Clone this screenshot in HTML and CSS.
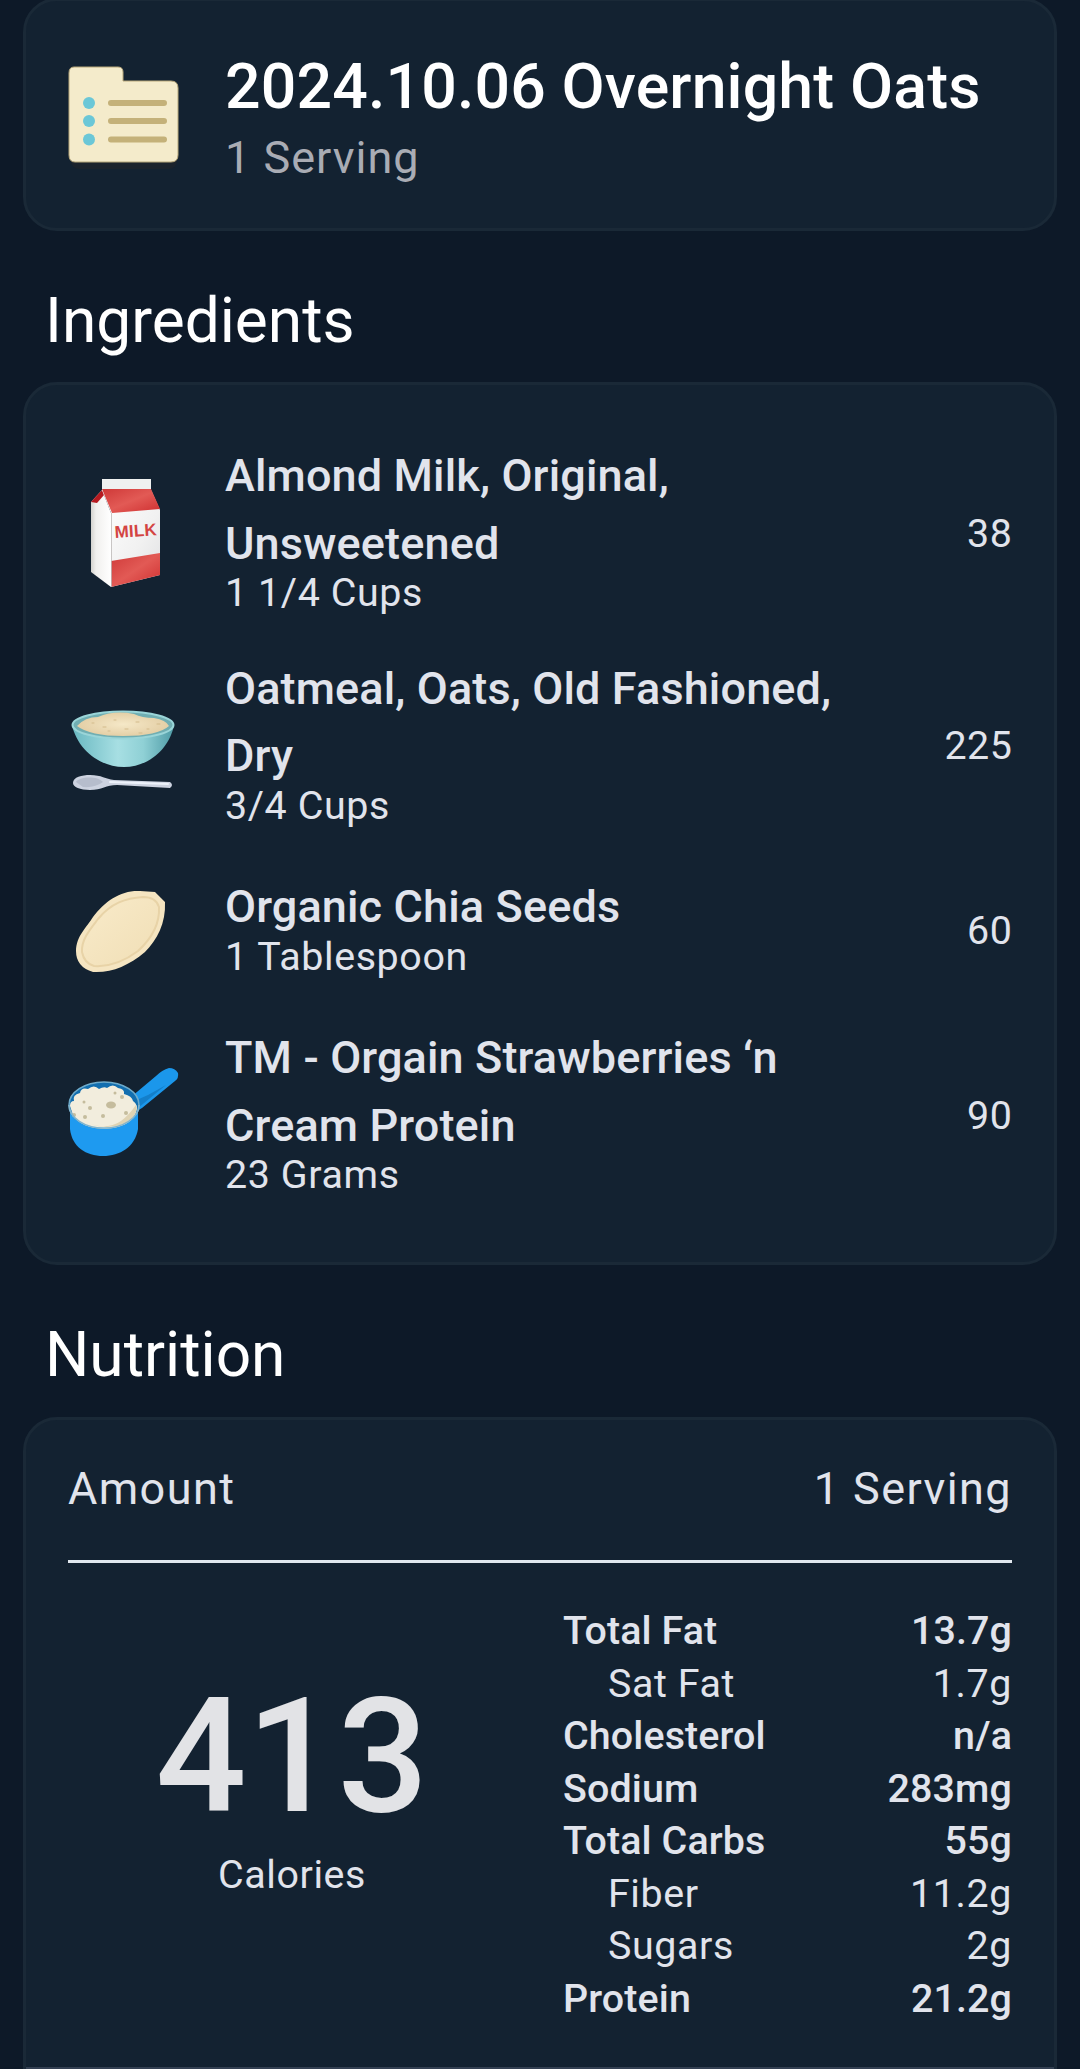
FILE: index.html
```html
<!DOCTYPE html>
<html lang="en">
<head>
  <meta charset="UTF-8" />
  <meta name="viewport" content="width=device-width, initial-scale=1.0"/>
  <title>2024.10.06 Overnight Oats</title>
  <link rel="stylesheet" href="styles.css">
</head>
<body>
  <header class="card recipe">
    <svg class="icon" viewBox="0 0 112 112">
      <rect x="3" y="22" width="106" height="87" rx="8" fill="#1b232c"/>
      <path d="M6 7H50Q55 7 55 12V21H103Q110 21 110 28V95Q110 102 103 102H7Q1 102 1 95V13Q1 7 6 7Z" fill="#f4ebcb" stroke="#b7a77b"/>
      <g fill="#6bc7d7">
        <circle cx="21" cy="43" r="6"/>
        <circle cx="21" cy="61" r="6"/>
        <circle cx="21" cy="79.500" r="6"/>
      </g>
      <path d="M43 43H96M43 61H96M43 79.500H96" stroke="#c4b179" stroke-width="6" stroke-linecap="round"/>
    </svg>
    <div>
      <h1>2024.10.06 Overnight Oats</h1>
      <p class="serving">1 Serving</p>
    </div>
  </header>

  <h2 class="ingredients-title">Ingredients</h2>
  <section class="card ingredients">
    <div class="row">
      <svg class="icon" viewBox="0 0 112 112">
        <defs>
          <linearGradient id="side"><stop offset="0" stop-color="#d3d2ce"/><stop offset="0.250" stop-color="#f1f0ee"/><stop offset="1" stop-color="#fff"/></linearGradient>
          <linearGradient id="front" x2="1" y2="1"><stop offset="0" stop-color="#fff"/><stop offset="0.600" stop-color="#f1f1f1"/><stop offset="1" stop-color="#dfe0e2"/></linearGradient>
          <linearGradient id="red" x2="1" y2="1"><stop offset="0" stop-color="#cf3938"/><stop offset="0.500" stop-color="#e25a55"/><stop offset="1" stop-color="#cf2f30"/></linearGradient>
        </defs>
        <path d="M34 2H83V14H34Z" fill="#eff1f0"/>
        <path d="M34 13L23 25V95L43 110V36Z" fill="url(#side)"/>
        <path d="M34 13L23 25L29 26L36 18Z" fill="#b61a20"/>
        <path d="M34 13H83L92 33V98L43 110V36Z" fill="url(#front)"/>
        <path d="M34 12H83L92 32L44 36Z" fill="url(#red)"/>
        <path d="M43 84L92 76V98L43 110Z" fill="url(#red)"/>
        <path d="M43.500 36V110" stroke="#bcb9b7" stroke-width="0.800"/>
        <text x="47" y="61" class="milk-label" transform="rotate(-4 47 61)" textLength="42">MILK</text>
      </svg>
      <div class="info">
        <h3>Almond Milk, Original, Unsweetened</h3>
        <p>1 1/4 Cups</p>
      </div>
      <span class="value">38</span>
    </div>

    <div class="row">
      <svg class="icon" viewBox="0 0 112 112">
        <defs>
          <linearGradient id="bowl"><stop offset="0" stop-color="#69b8c1"/><stop offset="0.450" stop-color="#a7dfe3"/><stop offset="0.700" stop-color="#8fd0d5"/><stop offset="1" stop-color="#4e9ba6"/></linearGradient>
          <radialGradient id="oats"><stop offset="0" stop-color="#f5e8c7"/><stop offset="1" stop-color="#e4cfa6"/></radialGradient>
        </defs>
        <path d="M4 35C9 58 30 77 56 77S102 57 106 35Z" fill="url(#bowl)"/>
        <ellipse cx="55" cy="35" rx="50.500" ry="13.500" fill="#70aeb2" stroke="#9ad5d8" stroke-width="2"/>
        <path d="M9 36Q17 27 30 27Q46 20 66 24Q74 28 86 28Q98 30 101 36Q90 46 55 46Q22 46 9 36Z" fill="url(#oats)"/>
        <path d="M24 33h2M35 37h3M46 30h2M57 39h3M68 32h3M79 39h2M89 34h3M40 41h2M71 43h3" stroke="#d3bb8c" stroke-linecap="round"/>
        <path d="M5 93C5 87 14 85 22 85C34 85 37 89 46 90L102 92Q106 95 102 98L49 95C38 95 34 100 22 100C12 100 5 97 5 93Z" fill="#cdd3e0"/>
        <path d="M8 92C10 87 29 85 35 92Q27 98 15 97Z" fill="#b6bdcc"/>
        <path d="M42 92L100 94" stroke="#edf2fa" stroke-width="2" stroke-linecap="round"/>
      </svg>
      <div class="info">
        <h3>Oatmeal, Oats, Old Fashioned, Dry</h3>
        <p>3/4 Cups</p>
      </div>
      <span class="value">225</span>
    </div>

    <div class="row">
      <svg class="icon" viewBox="0 0 112 112">
        <defs>
          <linearGradient id="seed" x2="1" y2="1"><stop offset="0" stop-color="#f9ebca"/><stop offset="1" stop-color="#f0deb5"/></linearGradient>
        </defs>
        <path d="M8 76C8 61 19 52 25 42C37 26 53 15 72 16L87 17L97 27C98 48 89 65 77 77C60 91 44 98 25 97Q8 92 8 76Z" fill="#f5e5c1"/>
        <path d="M14 77C13 64 24 52 30 44C43 28 58 23 75 22Q88 22 91 32C92 50 82 65 70 76C54 88 40 92 26 91Q16 88 14 77Z" fill="url(#seed)" stroke="#e8d3a7" stroke-width="2"/>
      </svg>
      <div class="info">
        <h3>Organic Chia Seeds</h3>
        <p>1 Tablespoon</p>
      </div>
      <span class="value">60</span>
    </div>

    <div class="row">
      <svg class="icon" viewBox="0 -1 112 112">
        <path d="M57 42L88 16Q94 10 101 8Q107 8 110 13Q111 18 107 21L74 48L64 54Z" fill="#1b97eb"/>
        <path d="M70 48L98 25L80 35L62 43Z" fill="#137fca"/>
        <path d="M2 43V69C4 87 18 96 35 96S67 87 70 69V43Z" fill="#1e9af0"/>
        <ellipse cx="36" cy="45" rx="35" ry="23" fill="#126eaf" stroke="#6eabcb" stroke-width="1.500"/>
        <path d="M2 46Q2 41 6 41Q4 35 12 33Q13 27 20 29Q26 24 31 29Q36 26 39 28Q45 23 50 28Q57 29 56 34Q64 36 65 41Q71 45 68 52C63 73 15 74 5 55Z" fill="#f2eddd"/>
        <path d="M22 64Q40 70 53 61Q61 55 68 45Q71 55 56 64Q38 70 22 64Z" fill="#dfd3b3"/>
        <g fill="#c5bc9d">
          <ellipse cx="43" cy="45" rx="5" ry="3.500"/>
          <circle cx="16" cy="42" r="1.500"/><circle cx="22" cy="48" r="2"/>
          <circle cx="35" cy="56" r="2"/><circle cx="17" cy="57" r="2"/>
          <circle cx="47" cy="33" r="1.500"/><circle cx="54" cy="37" r="2"/>
          <circle cx="6" cy="55" r="2"/><circle cx="58" cy="53" r="2"/>
        </g>
        <path d="M1 45A35 23 0 0 0 71 45" fill="none" stroke="#81b4cd" stroke-width="1.500"/>
      </svg>
      <div class="info">
        <h3>TM - Orgain Strawberries ‘n Cream Protein</h3>
        <p>23 Grams</p>
      </div>
      <span class="value">90</span>
    </div>
  </section>

  <h2 class="nutrition-title">Nutrition</h2>
  <section class="card nutrition">
    <div class="amount">
      <span>Amount</span>
      <span>1 Serving</span>
    </div>
    <div class="facts">
      <div class="calories">
        <strong>413</strong>
        <span>Calories</span>
      </div>
      <ul>
        <li><span>Total Fat</span><span>13.7g</span></li>
        <li class="sub"><span>Sat Fat</span><span>1.7g</span></li>
        <li><span>Cholesterol</span><span>n/a</span></li>
        <li><span>Sodium</span><span>283mg</span></li>
        <li><span>Total Carbs</span><span>55g</span></li>
        <li class="sub"><span>Fiber</span><span>11.2g</span></li>
        <li class="sub"><span>Sugars</span><span>2g</span></li>
        <li><span>Protein</span><span>21.2g</span></li>
      </ul>
    </div>
  </section>
</body>
</html>
```

FILE: styles.css
```css
* {
  box-sizing: border-box;
}
body {
  font-family: Roboto, sans-serif;
  margin: 0;
  height: 2069px;
  overflow: hidden;
  background: #0d1928;
  color: #e1e4ec;
  font-size: 39.4px;
  letter-spacing: 0.6px;
}
h1, h2, h3, p, ul {
  margin: 0;
  padding: 0;
}
.card {
  margin: 0 23px;
  background: #132231;
  border: 3px solid #1a2937;
  border-radius: 34px;
}
.icon {
  width: 112px;
  height: 112px;
  flex-shrink: 0;
}
/* Recipe header */
.recipe {
  display: flex;
  gap: 45px;
  height: 233px;
  margin-top: -2px;
  padding: 59px 42px 0;
}
.recipe h1 {
  color: white;
  font-size: 62.6px;
  font-weight: 500;
  line-height: 76px;
  margin-top: -11px;
  letter-spacing: 0.15px;
}
.serving {
  color: #a9acb4;
  font-size: 45px;
  line-height: 66px;
  letter-spacing: 1px;
}
h2 {
  color: white;
  font-size: 62.2px;
  font-weight: 400;
  line-height: 78px;
  letter-spacing: 0;
  padding: 51px 45px 21px;
}
/* Ingredients */
.ingredients-title {
  height: 151px;
}
.ingredients {
  height: 883px;
  padding: 42px;
}
.row {
  display: flex;
  align-items: center;
  gap: 45px;
  min-height: 157.5px;
  padding: 15.2px 0;
}
.info {
  flex: 1;
  padding-bottom: 8px;
}
.info h3 {
  font-size: 45px;
  font-weight: 500;
  line-height: 67.5px;
  letter-spacing: 0.14px;
  max-width: 630px;
}
.info p {
  line-height: 46px;
  margin-top: -7px;
}
.value {
  margin-right: -0.6px;
}
.milk-label {
  font-family: "Liberation Sans", sans-serif;
  font-size: 17px;
  font-weight: bold;
  letter-spacing: 0;
  fill: #d34442;
}
/* Nutrition */
.nutrition-title {
  height: 152px;
}
.nutrition {
  height: 700px;
  padding: 0;
}
.amount {
  display: flex;
  justify-content: space-between;
  height: 143px;
  margin: 0 42px;
  padding-top: 38px;
  border-bottom: 3px solid #e1e8ef;
  font-size: 45px;
  line-height: 62px;
  letter-spacing: 1.4px;
}
.facts {
  display: grid;
  grid-template-columns: 450px 1fr;
  column-gap: 45px;
  height: 507px;
  padding: 42px 42px 0;
  border-bottom: 3px solid #334052;
}
.calories {
  display: flex;
  flex-direction: column;
  align-items: center;
  padding-top: 60px;
}
.calories strong {
  color: #e2e3e6;
  font-size: 160px;
  font-weight: 500;
  line-height: 184px;
  letter-spacing: 0;
  margin-left: -2px;
}
.calories span {
  line-height: 46px;
  margin: 3px 2px 0 0;
}
.facts li {
  display: flex;
  justify-content: space-between;
  line-height: 52.5px;
  font-weight: 500;
  letter-spacing: 0.12px;
}
.facts .sub {
  padding-left: 45px;
  font-weight: 400;
  letter-spacing: 0.6px;
}
```
